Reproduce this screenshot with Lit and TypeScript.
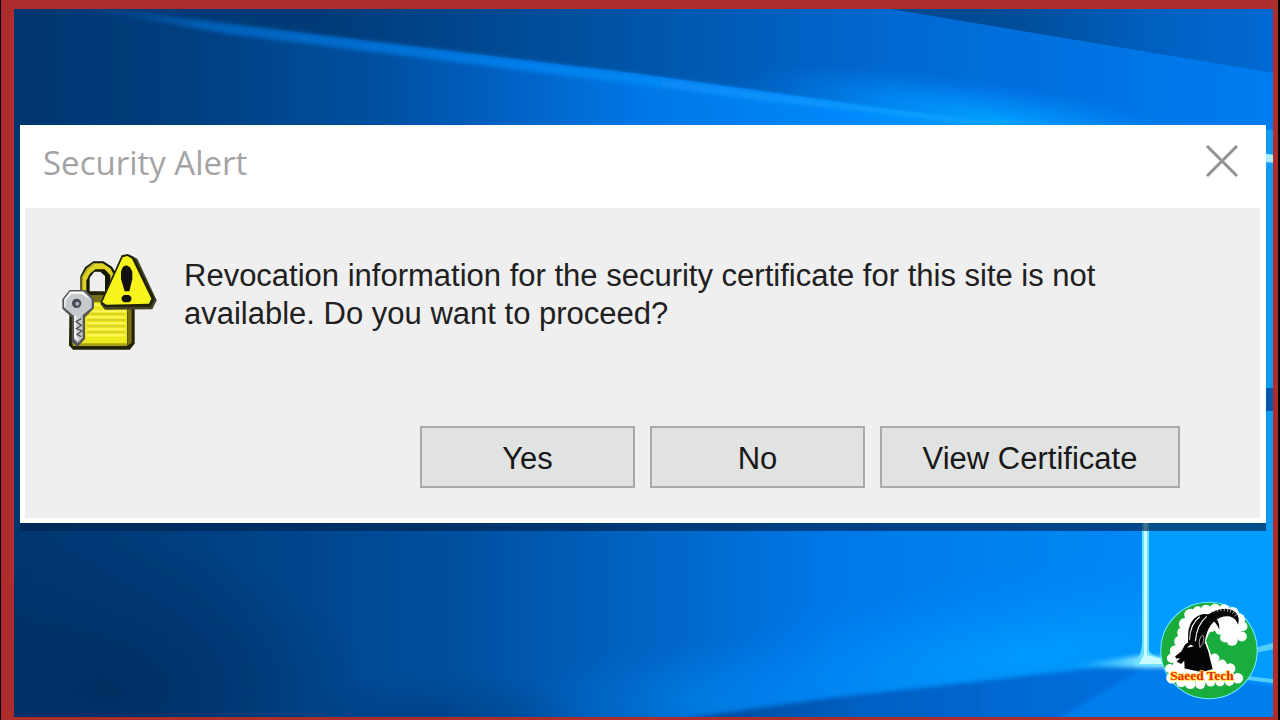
import { LitElement, html, css, svg } from "lit";
import { customElement, property } from "lit/decorators.js";

@customElement("desktop-wallpaper")
class DesktopWallpaper extends LitElement {
  static styles = css`
    :host { display: block; }
    .art { display: block; width: 100%; height: 100%; }
  `;
  render() {
    return html`<svg class="art" viewBox="0 0 1280 720" preserveAspectRatio="none" aria-hidden="true">
      <defs>
        <linearGradient id="base" x1="0" x2="1" y1="0" y2="0">
          <stop offset="0" stop-color="#00356e" /><stop offset=".15" stop-color="#003f80" />
          <stop offset=".35" stop-color="#004f9e" /><stop offset=".5" stop-color="#0063c2" />
          <stop offset=".65" stop-color="#0078e8" /><stop offset="1" stop-color="#0090fc" />
        </linearGradient>
        <linearGradient id="lower" x1="0" x2="1" y1="0" y2="0">
          <stop offset="0" stop-color="#00356e" /><stop offset=".15" stop-color="#003f80" />
          <stop offset=".3" stop-color="#0050a2" /><stop offset=".4" stop-color="#0062c4" />
          <stop offset=".5" stop-color="#0076e6" /><stop offset=".7" stop-color="#008cff" />
          <stop offset="1" stop-color="#0090fc" />
        </linearGradient>
        <linearGradient id="upper" x1="0" x2="1" y1="0" y2="0">
          <stop offset="0" stop-color="#003a76" /><stop offset=".25" stop-color="#003b78" />
          <stop offset=".52" stop-color="#0057ad" /><stop offset=".7" stop-color="#0069d2" />
          <stop offset="1" stop-color="#007cf2" />
        </linearGradient>
        <linearGradient id="beam" x1="0" x2="1" y1="0" y2="0">
          <stop offset="0" stop-color="#004b94" stop-opacity="0" /><stop offset=".15" stop-color="#0560b8" />
          <stop offset=".5" stop-color="#0680ee" /><stop offset=".85" stop-color="#0899ff" />
          <stop offset="1" stop-color="#35baff" />
        </linearGradient>
        <linearGradient id="corner" x1="0" x2="1" y1="0" y2="0">
          <stop offset="0" stop-color="#00488e" /><stop offset=".35" stop-color="#004c98" />
          <stop offset=".7" stop-color="#0060c0" /><stop offset="1" stop-color="#006ad4" />
        </linearGradient>
        <linearGradient id="floor" x1="0" x2="1" y1="0" y2="0">
          <stop offset="0" stop-color="#004898" /><stop offset=".3" stop-color="#0060c4" />
          <stop offset="1" stop-color="#0078ec" />
        </linearGradient>
        <radialGradient id="glow">
          <stop offset="0" stop-color="#00a2ff" /><stop offset=".5" stop-color="#0093ff" stop-opacity=".6" />
          <stop offset="1" stop-color="#0080f8" stop-opacity="0" />
        </radialGradient>
        <radialGradient id="shade">
          <stop offset="0" stop-color="#002a5c" stop-opacity=".75" /><stop offset="1" stop-color="#002a5c" stop-opacity="0" />
        </radialGradient>
        <linearGradient id="flare" x1="0" x2="1" y1="0" y2="0">
          <stop offset="0" stop-color="#20acff" stop-opacity="0" /><stop offset=".55" stop-color="#50caff" />
          <stop offset="1" stop-color="#d8ffff" />
        </linearGradient>
        <filter id="soft" x="-20%" y="-100%" width="140%" height="300%"><feGaussianBlur stdDeviation="2" /></filter>
      </defs>
      <rect width="1280" height="720" fill="url(#base)" />
      <rect width="1280" height="140" fill="url(#lower)" />
      <path d="M0 0H1280V140H1080L967 120L762 91L640 74L408 46L229 24L90 4L0 4Z" fill="url(#upper)" />
      <ellipse cx="1000" cy="122" rx="260" ry="40" transform="rotate(9 1000 122)" fill="url(#glow)" />
      <path d="M60 4L229 24L408 46L640 75L762 92L1010 126L762 101L640 85L408 56L229 34Z" fill="url(#beam)" filter="url(#soft)" />
      <path d="M890 9L1280 74V0H860Z" fill="url(#corner)" />
      <ellipse cx="110" cy="690" rx="260" ry="150" fill="url(#shade)" />
      <ellipse cx="440" cy="730" rx="160" ry="60" fill="url(#shade)" opacity=".5" />
      <ellipse cx="700" cy="700" rx="170" ry="60" fill="url(#glow)" opacity=".25" />
      <ellipse cx="1040" cy="655" rx="420" ry="95" transform="rotate(-8 1040 655)" fill="url(#glow)" opacity=".8" />
      <path d="M690 718L830 698L1150 662L1280 690V730H690Z" fill="url(#floor)" filter="url(#soft)" />
      <path d="M1148 520H1280V700L1148 660Z" fill="#009cff" />
      <path d="M1148 665L1280 686V730H1040Z" fill="#007eee" filter="url(#soft)" />
      <path d="M1262 130H1280V530H1262Z" fill="#109bf0" />
      <path d="M1262 388H1280V411H1262Z" fill="#0558ac" />
      <path d="M1262 153L1280 156V163L1262 162Z" fill="#a8f0ff" />
      <path d="M1060 666L1144 655L1175 659V667L1144 668Z" fill="url(#flare)" filter="url(#soft)" />
      <path d="M1142 520H1149V650Q1150 658 1175 659V666H1135V659Q1142 658 1142 640Z" fill="#70e0ff" />
      <path d="M1144 520H1147V655L1170 661V664H1139L1144 655Z" fill="#c8fbff" />
      <path d="M1250 649L1280 641V648L1250 654ZM1248 676L1280 680V684L1248 680Z" fill="#50ccff" />
    </svg>`;
  }
}

@customElement("channel-badge")
class ChannelBadge extends LitElement {
  static styles = css`
    :host { display: block; }
    .badge { display: block; width: 100%; height: 100%; }
    .name { font: bold 40px "Liberation Serif", serif; }
  `;
  render() {
    const puffs = [[122,78,19],[143,66,14],[168,62,15],[195,60,16],[222,63,17],[248,72,18],[267,91,18],[278,112,14],[275,142,15],[246,153,17],[225,145,15],[210,122,15],[105,105,18],[99,131,17],[91,157,18],[77,185,17],[65,207,14],[60,238,14],[66,266,17],[94,279,15],[121,283,16],[151,285,15],[182,278,14],[210,277,14],[238,276,14],[263,267,16],[240,238,16],[216,225,14],[194,207,14]];
    return html`<svg class="badge" viewBox="31 36 292 296" role="img" aria-label="Saeed Tech">
      <circle cx="177" cy="184" r="144" fill="#18ad3d" stroke="#72edff" stroke-width="3" />
      <g fill="#fff">
        ${puffs.map(([x, y, r]) => svg`<circle cx=${x} cy=${y} r=${r} />`)}
        <path d="M122 75L165 57L232 62L268 92L278 120L260 148L225 142L207 122L178 130L168 155L188 209L240 235L260 270L160 281L65 264L72 204L92 170Z" />
      </g>
      <path d="M114 166L115 130Q120 84 160 75L184 76Q152 92 143 124L136 164Z" fill="#050505" />
      <path d="M137 166L140 140Q150 78 204 62Q240 54 258 72Q270 84 264 107Q258 88 240 82Q214 78 192 97Q172 116 166 148L164 170Z" fill="#050505" />
      <path d="M76 201L94 187L106 165L120 157L150 158L166 164L174 184L188 240L154 248L104 238L103 214L94 224L80 217L91 207L78 208Z" fill="#050505" />
      <path d="M186 77Q210 92 208 121Q198 99 180 86Z" fill="#050505" />
      <path d="M148 168Q146 146 158 138Q165 145 159 162L150 175Z" fill="#050505" stroke="#fff" stroke-width="2" />
      <path d="M119 152Q120 104 150 83M136 156Q140 108 170 82" fill="none" stroke="#fff" stroke-width="3" />
      <path d="M111 175L122 167L132 171L120 174Z" fill="#fff" />
      <path d="M190 64L194 70M200 60L204 68M211 57L213 66M222 57L223 66M233 59L232 68M243 62L240 70M252 67L247 74M260 76L253 81" stroke="#fff" stroke-width="2" />
      <text class="name" x="61" y="272" fill="#ed2618" stroke="#ffe43c" stroke-width="5" paint-order="stroke">Saeed Tech</text>
    </svg>`;
  }
}

@customElement("security-icon")
class SecurityIcon extends LitElement {
  static styles = css`
    :host { display: block; }
    .icon { display: block; width: 100%; height: 100%; }
  `;
  render() {
    return html`<svg class="icon" viewBox="36 36 288 294" aria-hidden="true">
      <path d="M91 165V106L105 79L130 61H160L186 77L198 97V165H165V105L151 92H133L119 110V165Z" fill="#171706" />
      <path d="M97 160V107L111 84L132 67H158L181 82L190 98V160H181V103L164 85H136L119 99L109 119V160Z" fill="#dfd324" />
      <path d="M97 151V107L111 84L132 67" fill="none" stroke="#aaa32c" stroke-width="5" />
      <path d="M59 165L75 151H244L254 161V308L239 326H69L57 313Z" fill="#222105" />
      <path d="M68 164H231V310H68Z" fill="#ece91d" />
      <path d="M232 164L245 158V305L232 314Z" fill="#777111" />
      <path d="M109 163H229V184H109Z" fill="#777115" />
      <path d="M112 193H225M112 211H225M112 229H225M112 247H225M112 265H225M112 283H225" stroke="#fff65c" stroke-width="6" />
      <path d="M112 219H225M112 237H225M112 255H225M112 273H225" stroke="#d2cb2c" stroke-width="4" />
      <path d="M68 307H231V315H68Z" fill="#aaa214" />
      <path d="M59 147H106L132 174V202L105 229V294L83 317L65 303V229L37 203V174Z" fill="#555" />
      <path d="M61 151H101L125 174V200L98 222V290L83 306L72 294V225L43 200V175Z" fill="#c5c8cc" />
      <path d="M60 153H99L120 174L112 170L94 158H65L47 177V196L43 200V175Z" fill="#fff" />
      <path d="M76 224V287L83 296" fill="none" stroke="#f9f9f9" stroke-width="6" />
      <path d="M94 233L78 242L94 253L79 263L96 270L81 280L94 287" fill="none" stroke="#555" stroke-width="4" />
      <circle cx="80" cy="187" r="14" fill="#444b55" /><circle cx="82" cy="188" r="6" fill="#adb4bd" />
      <path d="M216 46L237 41L262 53L320 178L307 205L165 206L151 189Z" fill="#45442a" />
      <path d="M215 43L233 39L252 48L315 174L301 197L165 198L151 184Z" fill="#22220b" />
      <path d="M218 49L232 45L246 53L304 173L297 188L169 191L157 183Z" fill="#f8f51d" />
      <path d="M213 91L219 77L229 73L240 79L247 92V114L238 151H224L213 114Z" fill="#111" />
      <path d="M222 162H237L244 169V178L237 184H222L215 178V169Z" fill="#111" />
    </svg>`;
  }
}

@customElement("alert-dialog")
class AlertDialog extends LitElement {
  @property() heading = "";
  @property() message = "";
  @property({ attribute: false }) actions: { label: string; wide?: boolean }[] = [];

  static styles = css`
    :host { display: block; }
    .dialog {
      background: #fff;
      padding: 0 6px 5px 5px;
      box-shadow: 0 8px 0 rgba(0, 35, 78, 0.65);
      font-family: "Liberation Sans", Arial, sans-serif;
    }
    .titlebar {
      display: flex;
      align-items: center;
      justify-content: space-between;
      height: 83px;
      box-sizing: border-box;
      padding: 0 20px 8px 18px;
    }
    .title { margin: 0; font: 400 33px/40px "Open Sans", "Noto Sans", sans-serif; color: #a3a3a3; }
    .close { border: 0; padding: 0; background: none; width: 36px; height: 36px; margin-bottom: 4px; }
    .close svg { display: block; width: 36px; height: 36px; }
    .body { background: #efefef; padding: 45px 80px 30px 37px; }
    .notice { display: flex; align-items: flex-start; gap: 26px; min-height: 173px; }
    .icon { flex: none; width: 96px; height: 98px; }
    .message { margin: 4px 0 0; max-width: 940px; font-size: 31px; line-height: 38px; color: #202020; }
    .actions { display: flex; justify-content: flex-end; gap: 15px; }
    .action {
      width: 215px;
      height: 62px;
      padding: 3px 0 0;
      border: 2px solid #a8a9a9;
      background: #e1e2e2;
      color: #181818;
      font: inherit;
      font-size: 31px;
      white-space: nowrap;
    }
    .wide { width: 300px; }
  `;

  render() {
    return html`<section class="dialog" role="alertdialog" aria-labelledby="title" aria-describedby="message">
      <header class="titlebar">
        <h1 class="title" id="title">${this.heading}</h1>
        <button class="close" aria-label="Close">
          <svg viewBox="0 0 36 36"><path d="M3 3L33 33M33 3L3 33" stroke="#929292" stroke-width="3" /></svg>
        </button>
      </header>
      <div class="body">
        <div class="notice">
          <security-icon class="icon"></security-icon>
          <p class="message" id="message">${this.message}</p>
        </div>
        <div class="actions">
          ${this.actions.map((a) => html`<button class="action ${a.wide ? "wide" : ""}">${a.label}</button>`)}
        </div>
      </div>
    </section>`;
  }
}

@customElement("app-root")
class AppRoot extends LitElement {
  static styles = css`
    :host { display: block; }
    .screen {
      position: relative;
      min-height: 100vh;
      box-sizing: border-box;
      border: solid #000;
      border-width: 0 2px 0 1px;
      overflow: hidden;
    }
    .wallpaper { position: absolute; inset: 0 -2px 0 -1px; }
    .frame {
      position: relative;
      min-height: 100vh;
      box-sizing: border-box;
      border: solid #ad2c2c;
      border-width: 9px 5px 3px 13px;
      padding: 116px 7px 0 6px;
    }
    .badge { position: absolute; right: 15px; bottom: 17px; width: 98px; height: 99px; }
  `;
  render() {
    return html`<main class="screen">
      <desktop-wallpaper class="wallpaper"></desktop-wallpaper>
      <div class="frame">
        <alert-dialog
          heading="Security Alert"
          message="Revocation information for the security certificate for this site is not available. Do you want to proceed?"
          .actions=${[{ label: "Yes" }, { label: "No" }, { label: "View Certificate", wide: true }]}
        ></alert-dialog>
        <channel-badge class="badge"></channel-badge>
      </div>
    </main>`;
  }
}
